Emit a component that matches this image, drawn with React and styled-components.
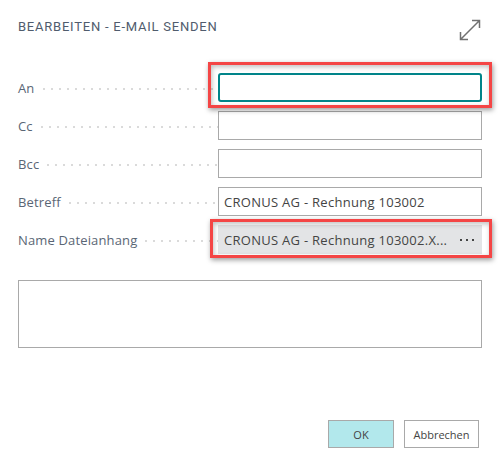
import React from "react";
import styled, { createGlobalStyle } from "styled-components";

const GlobalStyle = createGlobalStyle`
  html, body {
    margin: 0;
    background: #fff;
  }
`;

const rows = [
  { label: "An", focused: true },
  { label: "Cc" },
  { label: "Bcc" },
  { label: "Betreff", value: "CRONUS AG - Rechnung 103002" },
  { label: "Name Dateianhang", value: "CRONUS AG - Rechnung 103002.X...", readOnly: true },
];

function App() {
  return (
    <Dialog>
      <GlobalStyle />
      <Header>
        <Title>Bearbeiten - E-Mail senden</Title>
        <ExpandIcon width="22" height="22" viewBox="0 0 22 22" fill="none" stroke="#707070" strokeWidth="1.5">
          <path d="M1.5 20.5 20.5 1.5M13 1.5h7.5V9M1.5 13v7.5H9" />
        </ExpandIcon>
      </Header>

      <Form>
        {rows.map((row) => (
          <Row key={row.label}>
            <Label>
              {row.label}
              <Leader />
            </Label>
            <Field $focused={row.focused} $readOnly={row.readOnly}>
              <Value>{row.value}</Value>
              {row.readOnly && <More />}
            </Field>
          </Row>
        ))}
      </Form>

      <TextArea />

      <Footer>
        <Button $primary>OK</Button>
        <Button>Abbrechen</Button>
      </Footer>

      <Highlight $top={62} $left={208} $width={284} $height={46} />
      <Highlight $top={219} $left={210} $width={282} $height={39} />
    </Dialog>
  );
}

export default App;

const Dialog = styled.div`
  position: relative;
  box-sizing: border-box;
  width: 500px;
  height: 469px;
  padding: 19px 18px 0;
  background: #fff;
  font-family: "Open Sans", "Noto Sans", sans-serif;
`;

const Header = styled.div`
  display: flex;
  justify-content: space-between;
  align-items: flex-start;
  height: 54px;
`;

const Title = styled.div`
  font-family: Roboto, "Open Sans", sans-serif;
  font-size: 13px;
  line-height: 16px;
  letter-spacing: 0.77px;
  text-transform: uppercase;
  color: #505c6d;
`;

const ExpandIcon = styled.svg`
  margin-right: 1px;
`;

const Form = styled.div`
  display: flex;
  flex-direction: column;
  gap: 9px;
`;

const Row = styled.div`
  display: grid;
  grid-template-columns: 200px 264px;
  height: 29px;
`;

const Label = styled.div`
  display: flex;
  align-items: center;
  gap: 8px;
  font-size: 13px;
  letter-spacing: 0.15px;
  color: #5a6675;
`;

const Leader = styled.span`
  flex: 1;
  height: 2px;
  margin-top: 2px;
  background: repeating-linear-gradient(to right, #dadada 0 2px, transparent 2px 8px);
`;

const Field = styled.div`
  display: flex;
  align-items: center;
  justify-content: space-between;
  box-sizing: border-box;
  padding: 0 7px 0 5px;
  border: ${(p) => (p.$focused ? "2px solid #008489" : "1px solid #a9a9a9")};
  border-radius: ${(p) => (p.$focused ? "3px" : "0")};
  border-color: ${(p) => (p.$readOnly ? "#e3e4e6" : undefined)};
  background: ${(p) => (p.$readOnly ? "#e3e4e6" : "#fff")};
`;

const Value = styled.span`
  font-size: 13px;
  letter-spacing: 0.28px;
  white-space: nowrap;
  color: #444;
`;

const More = styled.span`
  width: 14px;
  height: 2px;
  background: repeating-linear-gradient(to right, #444 0 2px, transparent 2px 6px);
`;

const TextArea = styled.div`
  box-sizing: border-box;
  height: 68px;
  margin-top: 26px;
  border: 1px solid #a9a9a9;
`;

const Footer = styled.div`
  display: flex;
  justify-content: flex-end;
  gap: 10px;
  margin-top: 72px;
  padding-right: 3px;
`;

const Button = styled.button`
  box-sizing: border-box;
  width: ${(p) => (p.$primary ? "66px" : "75px")};
  height: 28px;
  padding: 0;
  border: 1px solid #a9a9a9;
  background: ${(p) => (p.$primary ? "#b2e8ec" : "#fff")};
  font-family: "Open Sans", "Noto Sans", sans-serif;
  font-size: 11px;
  color: #444;
`;

const Highlight = styled.div`
  position: absolute;
  box-sizing: border-box;
  top: ${(p) => p.$top}px;
  left: ${(p) => p.$left}px;
  width: ${(p) => p.$width}px;
  height: ${(p) => p.$height}px;
  border: 3px solid #f44545;
  box-shadow: 1px 2px 5px rgba(0, 0, 0, 0.4), inset 1px 2px 5px rgba(0, 0, 0, 0.25);
`;
